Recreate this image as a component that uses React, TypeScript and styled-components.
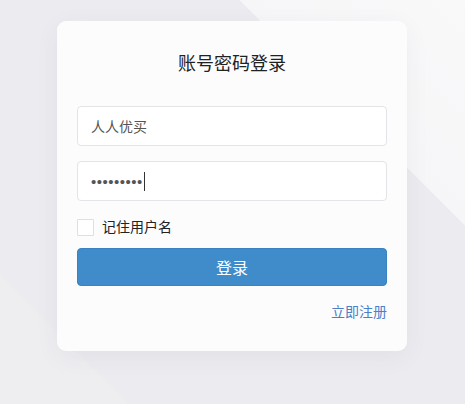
import React from 'react';
import styled, { createGlobalStyle } from 'styled-components';

const GlobalStyle = createGlobalStyle`
  html, body {
    margin: 0;
    padding: 0;
  }
  body {
    font-family: "Liberation Sans", "Noto Sans CJK SC", sans-serif;
    color: #333;
  }
`;

const Page = styled.div`
  box-sizing: border-box;
  width: 100%;
  min-height: 100vh;
  padding: 21px 1px 0 0;
  background: linear-gradient(
    45deg,
    #eeeef1 0%,
    #eeeef1 14.8%,
    #ebebf0 14.8%,
    #ebebf0 74%,
    #f6f6f8 74%,
    #f9f9fa 100%
  );
`;

const Card = styled.div`
  box-sizing: border-box;
  width: 350px;
  margin: 0 auto;
  padding: 30px 20px 29px;
  background: #fcfcfd;
  border-radius: 9px;
  box-shadow: 0 6px 24px rgba(60, 60, 90, 0.06);
  display: flex;
  flex-direction: column;
`;

const Title = styled.h2`
  margin: 0 0 29px;
  font-size: 18px;
  line-height: 26px;
  font-weight: normal;
  text-align: center;
  color: #222;
`;

const Field = styled.div<{ $gap?: number }>`
  box-sizing: border-box;
  height: 40px;
  margin-bottom: ${(p) => p.$gap ?? 0}px;
  padding: 0 13px;
  display: flex;
  align-items: center;
  background: #fff;
  border: 1px solid #e4e4e8;
  border-radius: 4px;
  font-size: 14px;
  color: #555;
`;

const Dots = styled.span`
  letter-spacing: 0.5px;
  color: #555;
  font-size: 15px;
`;

const Caret = styled.span`
  display: inline-block;
  width: 1px;
  height: 19px;
  margin-left: 1px;
  background: #333;
`;

const RememberRow = styled.label`
  margin-top: 18px;
  display: flex;
  align-items: center;
  gap: 8px;
  font-size: 14px;
  line-height: 17px;
  color: #222;
`;

const Box = styled.span`
  box-sizing: border-box;
  width: 17px;
  height: 17px;
  background: #fff;
  border: 1px solid #dedee3;
  border-radius: 1px;
`;

const Submit = styled.button`
  margin-top: 12px;
  height: 38px;
  border: 1px solid #3a82c2;
  border-radius: 4px;
  background: #408bca;
  color: #fff;
  font-family: inherit;
  font-size: 16px;
  cursor: pointer;
`;

const LinkRow = styled.div`
  margin-top: 16px;
  display: flex;
  justify-content: flex-end;
`;

const Register = styled.a`
  font-size: 14px;
  line-height: 20px;
  color: #4a80c9;
  text-decoration: none;
`;

export default function App() {
  return (
    <>
      <GlobalStyle />
      <Page>
        <Card>
          <Title>账号密码登录</Title>
          <Field $gap={15}>人人优买</Field>
          <Field>
            <Dots>•••••••••</Dots>
            <Caret />
          </Field>
          <RememberRow>
            <Box />
            记住用户名
          </RememberRow>
          <Submit type="button">登录</Submit>
          <LinkRow>
            <Register href="#">立即注册</Register>
          </LinkRow>
        </Card>
      </Page>
    </>
  );
}
